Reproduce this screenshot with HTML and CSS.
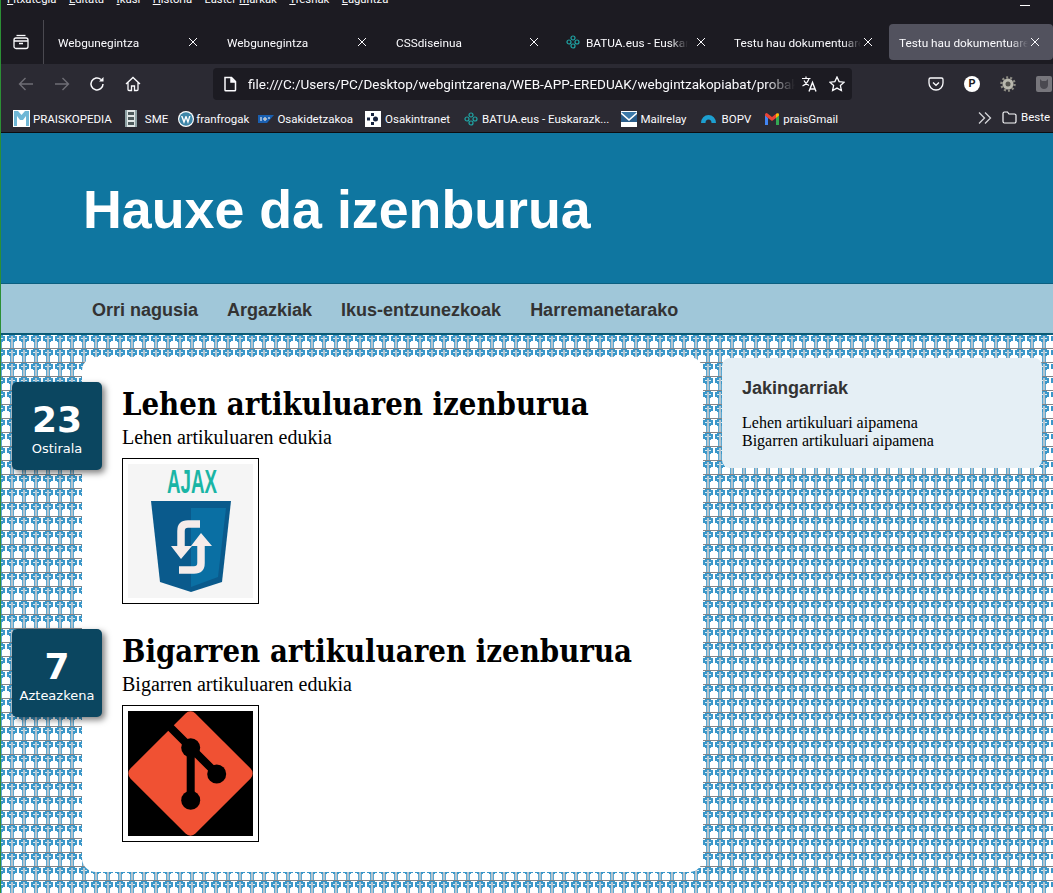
FILE: index.html
```html
<!DOCTYPE html>
<html lang="eu">
<head>
    <meta charset="UTF-8">
    <title>Hauxe da izenburua</title>
    <link rel="stylesheet" href="styles.css">
</head>
<body>
<div class="browser">
    <div class="menubar">
        <span><u>F</u>itxategia</span>
        <span><u>E</u>ditatu</span>
        <span><u>I</u>kusi</span>
        <span><u>H</u>istoria</span>
        <span>Laster-<u>m</u>arkak</span>
        <span><u>T</u>resnak</span>
        <span><u>L</u>aguntza</span>
        <i class="minimize"></i>
    </div>
    <div class="tabstrip">
        <div class="tray">
            <svg width="16" height="16" viewBox="0 0 16 16" fill="none" stroke="#fbfbfe" stroke-width="1.3"><path d="M3.5 1.5h9"/><rect x="1" y="4" width="14" height="10.5" rx="2"/><path d="M1 7h14M6 9.5h4"/></svg>
        </div>
        <div class="tab"><span class="tab-title">Webgunegintza</span><svg class="tab-x" width="10" height="10" viewBox="0 0 10 10"><path d="M1 1l8 8M9 1l-8 8"/></svg></div>
        <div class="tab"><span class="tab-title">Webgunegintza</span><svg class="tab-x" width="10" height="10" viewBox="0 0 10 10"><path d="M1 1l8 8M9 1l-8 8"/></svg></div>
        <div class="tab tab-wide"><span class="tab-title">CSSdiseinua</span><svg class="tab-x" width="10" height="10" viewBox="0 0 10 10"><path d="M1 1l8 8M9 1l-8 8"/></svg></div>
        <div class="tab tab-batua">
            <svg class="favicon" width="14" height="14" viewBox="0 0 14 14" fill="none" stroke="#1fa5a5" stroke-width="1.2"><circle cx="7" cy="3" r="2"/><circle cx="7" cy="11" r="2"/><circle cx="3" cy="7" r="2"/><circle cx="11" cy="7" r="2"/></svg>
            <span class="tab-title">BATUA.eus - Euskarazko</span><svg class="tab-x" width="10" height="10" viewBox="0 0 10 10"><path d="M1 1l8 8M9 1l-8 8"/></svg>
        </div>
        <div class="tab tab-narrow"><span class="tab-title">Testu hau dokumentuaren</span><svg class="tab-x" width="10" height="10" viewBox="0 0 10 10"><path d="M1 1l8 8M9 1l-8 8"/></svg></div>
        <div class="tab tab-active"><span class="tab-title">Testu hau dokumentuaren</span><svg class="tab-x" width="10" height="10" viewBox="0 0 10 10"><path d="M1 1l8 8M9 1l-8 8"/></svg></div>
    </div>
    <div class="toolbar">
        <div class="nav-btns">
            <svg width="16" height="16" viewBox="0 0 16 16" fill="none" stroke="#6f6e76" stroke-width="1.4"><path d="M15 8H1.5M7.5 2L1.500 8l6 6"/></svg>
            <svg width="16" height="16" viewBox="0 0 16 16" fill="none" stroke="#6f6e76" stroke-width="1.4"><path d="M1 8h13.500M8.500 2l6 6-6 6"/></svg>
            <svg width="16" height="16" viewBox="0 0 16 16" fill="none" stroke="#fbfbfe" stroke-width="1.5"><path d="M14 8a6 6 0 1 1-2-4.500"/><path d="M14.500 1v4.500H10" fill="#fbfbfe" stroke="none"/></svg>
            <svg width="16" height="16" viewBox="0 0 16 16" fill="none" stroke="#fbfbfe" stroke-width="1.3"><path d="M1 8l7-6.500L15 8M3 6.500v7a1 1 0 0 0 1 1h2.500V10h3v4.500H12a1 1 0 0 0 1-1v-7"/></svg>
        </div>
        <div class="urlbar">
            <svg width="14" height="16" viewBox="0 0 14 16" fill="none" stroke="#fbfbfe" stroke-width="1.5"><path d="M2 1.500h6.500L12.500 5.500V14a.8.8 0 0 1-.8.8H2.800A.8.8 0 0 1 2 14z"/><path d="M8 1.500v4.500h4.500" fill="#fbfbfe"/></svg>
            <span class="url">file:///C:/Users/PC/Desktop/webgintzarena/WEB-APP-EREDUAK/webgintzakopiabat/probak/index.html</span>
            <svg class="url-translate" width="17" height="16" viewBox="0 0 17 16" fill="none" stroke="#fbfbfe" stroke-width="1.2"><path d="M1 2.500h8.500M5 .5v2M8 2.500C7 6 4.500 8.500 1.500 10M3 4.500c1 2.500 3 4 5 5"/><path d="M8 15.500l3.500-9 3.500 9M9.200 13h4.600" stroke-width="1.4"/></svg>
            <svg class="url-star" width="16" height="16" viewBox="0 0 16 16" fill="none" stroke="#fbfbfe" stroke-width="1.300"><path d="M8 1l2.100 4.600 5 .6-3.700 3.400 1 5L8 12.100 3.600 14.600l1-5L.9 6.200l5-.6z"/></svg>
        </div>
        <div class="addons">
            <svg width="16" height="16" viewBox="0 0 16 16" fill="none" stroke="#fbfbfe" stroke-width="1.300"><path d="M2.500 2h11A1.500 1.500 0 0 1 15 3.500V7a7 7 0 0 1-14 0V3.500A1.500 1.500 0 0 1 2.500 2z"/><path d="M5 6.500L8 9.300l3-2.800"/></svg>
            <span class="addon-p">P</span>
            <svg width="16" height="16" viewBox="0 0 16 16"><circle cx="8" cy="8" r="5.500" fill="#b9b8ae"/><circle cx="8" cy="8" r="6.500" fill="none" stroke="#8d8c84" stroke-width="2.500" stroke-dasharray="2 2"/><circle cx="8" cy="8" r="2.500" fill="#55544f"/></svg>
            <svg class="addon-mask" width="16" height="16" viewBox="0 0 16 16"><rect width="16" height="16" rx="2" fill="#77767c"/><path d="M4 3l2 2h4l2-2v6c0 2.500-2 4-4 4s-4-1.500-4-4z" fill="#4a4950"/></svg>
        </div>
    </div>
    <div class="bookmarks">
        <span class="bm bm-praisko">
            <svg width="17" height="17" viewBox="0 0 17 17"><rect width="17" height="17" fill="#fff"/><path d="M1 1h4l3.500 4L12 1h4v15h-3V6l-3 4H7L4 6v10H1z" fill="#6fb7d6"/></svg>
            PRAISKOPEDIA</span>
        <span class="bm bm-sme">
            <svg width="12" height="17" viewBox="0 0 12 17"><rect width="12" height="17" fill="#dfe6e6"/><path d="M3 2h6v3H3zM3 7h6v3H3zM3 12h6v3H3z" fill="#4d5a5c"/><path d="M0 0h2v17H0zM10 0h2v17h-2z" fill="#8fa3a6"/></svg>
            SME</span>
        <span class="bm bm-wp">
            <svg width="16" height="16" viewBox="0 0 16 16"><circle cx="8" cy="8" r="8" fill="#fff"/><circle cx="8" cy="8" r="6.800" fill="#3f86a8"/><path d="M3 5l3 8 2-5.500L10 13l2.500-8h-1.500L10 9 8.500 5H7.500L6 9 4.500 5z" fill="#fff"/></svg>
            franfrogak</span>
        <span class="bm bm-sap">
            <svg width="16" height="8" viewBox="0 0 16 8"><path d="M0 0h16L9 8H0z" fill="#1a5fb0"/><path d="M2 3h2M2 5h2M6 3h2v2H6zM10 3h2" stroke="#fff" stroke-width="1"/></svg>
            Osakidetzakoa</span>
        <span class="bm bm-osak">
            <svg width="16" height="16" viewBox="0 0 16 16"><rect width="16" height="16" fill="#fff"/><path d="M2 6.500h3v3H2zM6 2h3v3H6zM6 11h3v3H6z" fill="#16233f"/><circle cx="10.500" cy="8" r="2.500" fill="#16233f"/></svg>
            Osakintranet</span>
        <span class="bm bm-batua">
            <svg width="14" height="14" viewBox="0 0 14 14" fill="none" stroke="#1fa5a5" stroke-width="1.200"><circle cx="7" cy="3" r="2"/><circle cx="7" cy="11" r="2"/><circle cx="3" cy="7" r="2"/><circle cx="11" cy="7" r="2"/></svg>
            BATUA.eus - Euskarazk...</span>
        <span class="bm bm-mail">
            <svg width="16" height="16" viewBox="0 0 16 16"><rect width="16" height="16" fill="#fff"/><path d="M0 1h16L8 8z" fill="#3b78a8"/><path d="M0 3l8 7 8-7v8H0z" fill="#2a5d8a"/></svg>
            Mailrelay</span>
        <span class="bm bm-bopv">
            <svg width="15" height="9" viewBox="0 0 15 9"><path d="M0 9a7.500 8 0 0 1 15 0h-4.500a3 3.500 0 0 0-6 0z" fill="#1d9fd0"/></svg>
            BOPV</span>
        <span class="bm bm-gmail">
            <svg width="14" height="12" viewBox="0 0 14 12"><path d="M0 1.500v10.500h3V5z" fill="#4285f4"/><path d="M14 1.500v10.500h-3V5z" fill="#34a853"/><path d="M0 1.500a1.500 1.500 0 0 1 2.500-1L7 4l4.500-3.500a1.500 1.500 0 0 1 1 0L11 5 7 8 3 5 0 2.500z" fill="#ea4335"/><path d="M11 1l1.500-.8A1.300 1.300 0 0 1 14 1.500v1L11 5z" fill="#fbbc04"/></svg>
            praisGmail</span>
        <svg class="bm-more" width="14" height="12" viewBox="0 0 14 12" fill="none" stroke="#d4d4d8" stroke-width="1.300"><path d="M1 .5L6.500 6 1 11.500M7 .5L12.500 6 7 11.500"/></svg>
        <span class="bm bm-other">
            <svg width="15" height="13" viewBox="0 0 15 13" fill="none" stroke="#fbfbfe" stroke-width="1.200"><path d="M1 2.500A1.500 1.500 0 0 1 2.500 1h3L7 3h5.500A1.500 1.500 0 0 1 14 4.500v6a1.500 1.500 0 0 1-1.500 1.500h-10A1.500 1.500 0 0 1 1 10.500z"/></svg>
            Beste laster-markak</span>
    </div>
</div>

<header class="site-header">
    <h1>Hauxe da izenburua</h1>
</header>
<nav class="site-nav">
    <a href="#">Orri nagusia</a>
    <a href="#">Argazkiak</a>
    <a href="#">Ikus-entzunezkoak</a>
    <a href="#">Harremanetarako</a>
</nav>

<main class="site-main">
    <section class="content">
        <article class="post">
            <div class="date">
                <span class="date-num">23</span>
                <span class="date-day">Ostirala</span>
            </div>
            <h2>Lehen artikuluaren izenburua</h2>
            <p>Lehen artikuluaren edukia</p>
            <div class="pic">
                <svg width="125" height="134" viewBox="0 0 125 134">
                    <rect width="125" height="134" fill="#f5f5f5"/>
                    <text x="39" y="29" class="ajax-txt" textLength="50" lengthAdjust="spacingAndGlyphs">AJAX</text>
                    <path d="M23 37H103L94 118 63 128 32 118z" fill="#0a5a8c"/>
                    <path d="M63 44H98L90 113 63 123z" fill="#0a6fa3"/>
                    <g fill="none" stroke="#f5ecea" stroke-width="7.500">
                        <path d="M72 60H60Q53 60 53 67V84"/>
                        <path d="M73 80V99Q73 106 66 106H51"/>
                    </g>
                    <path d="M43 82H64L53 95zM63 82H84L73 69z" fill="#f5ecea"/>
                </svg>
            </div>
        </article>
        <article class="post">
            <div class="date">
                <span class="date-num">7</span>
                <span class="date-day">Azteazkena</span>
            </div>
            <h2>Bigarren artikuluaren izenburua</h2>
            <p>Bigarren artikuluaren edukia</p>
            <div class="pic">
                <svg width="125" height="125" viewBox="0 0 125 125">
                    <rect width="125" height="125" fill="#000"/>
                    <rect x="16.500" y="16.500" width="92" height="92" rx="7" transform="rotate(45 62.500 62.500)" fill="#f05133"/>
                    <g fill="none" stroke="#000" stroke-width="8">
                        <path d="M40 14L89 63M62.700 37V89"/>
                    </g>
                    <circle cx="62.700" cy="36.700" r="9.500"/>
                    <circle cx="88.700" cy="63" r="9.500"/>
                    <circle cx="62.700" cy="89.300" r="9.500"/>
                </svg>
            </div>
        </article>
    </section>
    <aside class="sidebar">
        <h3>Jakingarriak</h3>
        <ul>
            <li>Lehen artikuluari aipamena</li>
            <li>Bigarren artikuluari aipamena</li>
        </ul>
    </aside>
</main>
</body>
</html>
```

FILE: styles.css
```css
*{
    margin: 0;
    padding: 0;
    box-sizing: border-box;
}
html,body{
    height: 100%;
    overflow: hidden;
}
body{
    display: flex;
    flex-direction: column;
    border-left: 1px solid #2c8f35;
    background: #fff;
}
ul{
    list-style: none;
}

/* browser chrome */
.browser{
    flex: none;
    font-family: Roboto, sans-serif;
    color: #fbfbfe;
    font-size: 11.800px;
    background: #1c1b22;
}
.menubar{
    position: relative;
    display: flex;
    gap: 12.500px;
    height: 9px;
    padding-left: 6px;
    overflow: hidden;
    font-size: 11.300px;
    line-height: 14px;
}
.menubar span{
    margin-top: -7px;
}
.minimize{
    position: absolute;
    left: 1019px;
    top: 5px;
    width: 10px;
    height: 1px;
    background: #fff;
}
.tabstrip{
    display: flex;
    height: 55px;
    padding-top: 15px;
    padding-bottom: 4px;
}
.tray{
    flex: none;
    display: flex;
    align-items: center;
    justify-content: center;
    width: 43px;
    height: 44px;
    margin-top: -4px;
    padding-right: 2px;
    margin-right: 2px;
    border-right: 1px solid #4a4950;
}
.tab{
    flex: none;
    display: flex;
    align-items: center;
    width: 169px;
    height: 36px;
    padding-left: 12px;
    padding-right: 17px;
    border-radius: 4px;
}
.tab-wide{
    width: 170px;
    padding-right: 15px;
}
.tab-batua{
    width: 168px;
    gap: 6px;
    padding-right: 16px;
}
.tab-narrow{
    width: 167px;
    padding-right: 16px;
}
.tab-active{
    width: 164px;
    background: #52525e;
    padding-left: 10px;
    padding-right: 13px;
}
.tab-title{
    flex: 1;
    min-width: 0;
    padding-top: 2px;
    overflow: hidden;
    white-space: nowrap;
    -webkit-mask-image: linear-gradient(to left, transparent 0, #000 18px);
    mask-image: linear-gradient(to left, transparent 0, #000 18px);
}
.tab-narrow .tab-title,
.tab-active .tab-title,
.tab-batua .tab-title{
    margin-right: -2px;
}
.tab-x{
    flex: none;
    margin-left: 4px;
    fill: none;
    stroke: #fbfbfe;
    stroke-width: 1;
}
.favicon{
    flex: none;
}
.toolbar{
    display: flex;
    align-items: center;
    height: 40px;
    background: #2b2a33;
}
.nav-btns{
    flex: none;
    display: flex;
    gap: 19.500px;
    width: 212px;
    padding-left: 17px;
}
.urlbar{
    display: flex;
    align-items: center;
    width: 639px;
    height: 32px;
    padding-left: 10px;
    padding-right: 4px;
    background: #1c1b22;
    border-radius: 4px;
}
.url{
    flex: 1;
    min-width: 0;
    margin-left: 11px;
    overflow: hidden;
    white-space: nowrap;
    font-size: 13.500px;
    -webkit-mask-image: linear-gradient(to left, transparent 0, #000 30px);
    mask-image: linear-gradient(to left, transparent 0, #000 30px);
}
.url-translate{
    flex: none;
    margin-left: 6px;
}
.url-star{
    flex: none;
    margin-left: 11px;
    margin-right: 3px;
}
.addons{
    flex: none;
    display: flex;
    align-items: center;
    gap: 20px;
    margin-left: 76px;
    white-space: nowrap;
}
.addon-p{
    width: 16px;
    height: 16px;
    border-radius: 50%;
    background: #fff;
    color: #1c1b22;
    font-size: 11px;
    font-weight: 700;
    line-height: 16px;
    text-align: center;
}
.addon-mask{
    flex: none;
}
.bookmarks{
    position: relative;
    display: flex;
    align-items: center;
    height: 29px;
    padding-left: 12px;
    padding-top: 1px;
    overflow: hidden;
    background: #2b2a33;
    border-bottom: 1px solid #0c0c0f;
    white-space: nowrap;
    font-size: 11.500px;
}
.bm{
    flex: none;
    display: flex;
    align-items: center;
    gap: 3px;
}
.bm-sme{
    margin-left: 13px;
    gap: 8px;
}
.bm-wp{
    margin-left: 10px;
    gap: 2px;
}
.bm-sap{
    margin-left: 9px;
}
.bm-osak{
    margin-left: 12px;
    gap: 4px;
}
.bm-batua{
    margin-left: 14px;
    gap: 4px;
}
.bm-mail{
    margin-left: 12px;
}
.bm-bopv{
    margin-left: 14px;
    gap: 6px;
}
.bm-gmail{
    margin-left: 14px;
    gap: 4px;
}
.bm-more{
    position: absolute;
    left: 977px;
    top: 8px;
}
.bm-other{
    position: absolute;
    left: 1001px;
    top: 6px;
    gap: 4px;
}

/* page */
.site-header{
    flex: none;
    height: 151px;
    padding-left: 82px;
    padding-top: 44px;
    background: #0f76a0;
    border-bottom: 1px solid #0b5f80;
}
.site-header h1{
    font-family: "Liberation Sans", Arial, sans-serif;
    font-size: 53.750px;
    line-height: 64px;
    font-weight: 700;
    color: #fff;
}
.site-nav{
    flex: none;
    display: flex;
    gap: 29px;
    height: 51px;
    padding-left: 91px;
    background: #a0c7d9;
    border-bottom: 2px solid #0b5a75;
    font-family: "Liberation Sans", Arial, sans-serif;
    font-size: 18px;
    font-weight: 700;
    line-height: 52px;
}
.site-nav a{
    color: #333;
    text-decoration: none;
}
.site-main{
    flex: 1;
    display: flex;
    align-items: flex-start;
    gap: 19px;
    padding-top: 22px;
    padding-left: 81px;
    background-color: #fff;
    background-position: 5px 0;
    background-image: url("data:image/svg+xml,%3Csvg xmlns='http://www.w3.org/2000/svg' width='12' height='14' shape-rendering='crispEdges'%3E%3Crect width='12' height='14' fill='%23fff'/%3E%3Cpath d='M3 0h6v1h2v5H9v1H3V6H1V1h2z' fill='%233a97c9'/%3E%3Cpath d='M4 7h1v6H4zM7 7h1v6H7z' fill='%235aa8d2'/%3E%3Cpath d='M5 1h2v12H5z' fill='%23b4c4ce'/%3E%3Cpath d='M3 3h2v1H3zM7 3h2v1H7z' fill='%23dcebf3'/%3E%3Cpath d='M0 13h12v1H0z' fill='%23808488'/%3E%3C/svg%3E");
}
.content{
    flex: none;
    width: 621px;
    padding: 25px 0 30px 40px;
    background: #fff;
    border-radius: 14px;
}
.post{
    position: relative;
    height: 247px;
}
.post:last-child{
    height: auto;
}
.date{
    position: absolute;
    left: -110px;
    top: 0;
    display: flex;
    flex-direction: column;
    align-items: center;
    width: 90px;
    height: 88px;
    padding-top: 17px;
    background: #0b4660;
    border-radius: 5px;
    box-shadow: 3px 3px 6px rgba(0, 0, 0, .5);
    color: #fff;
    font-family: "DejaVu Sans", Verdana, sans-serif;
}
.date-num{
    font-size: 36px;
    font-weight: 700;
    line-height: 42px;
}
.date-day{
    font-size: 13px;
    line-height: 16px;
}
.post h2{
    font-family: "DejaVu Serif Condensed", "DejaVu Serif", Georgia, serif;
    font-stretch: condensed;
    font-size: 30.800px;
    line-height: 44px;
    font-weight: 700;
    color: #000;
}
.post p{
    font-family: "Liberation Serif", Georgia, serif;
    font-size: 20px;
    line-height: 23px;
    color: #000;
}
.pic{
    width: 137px;
    margin-top: 9px;
    padding: 5px;
    border: 1px solid #000;
    background: #fff;
}
.pic svg{
    display: block;
}
.ajax-txt{
    font-family: "Liberation Sans", sans-serif;
    font-size: 33px;
    font-weight: 700;
    fill: #1ab5a5;
}
.sidebar{
    flex: none;
    width: 320px;
    height: 110px;
    margin-top: 1px;
    padding: 20px;
    background: #e5eff5;
    border-radius: 8px;
}
.sidebar h3{
    font-family: "Liberation Sans", Arial, sans-serif;
    font-size: 18px;
    line-height: 20px;
    font-weight: 700;
    color: #333;
    margin-bottom: 16px;
}
.sidebar li{
    font-family: "Liberation Serif", "Times New Roman", serif;
    font-size: 16px;
    line-height: 18px;
    color: #000;
}
```
